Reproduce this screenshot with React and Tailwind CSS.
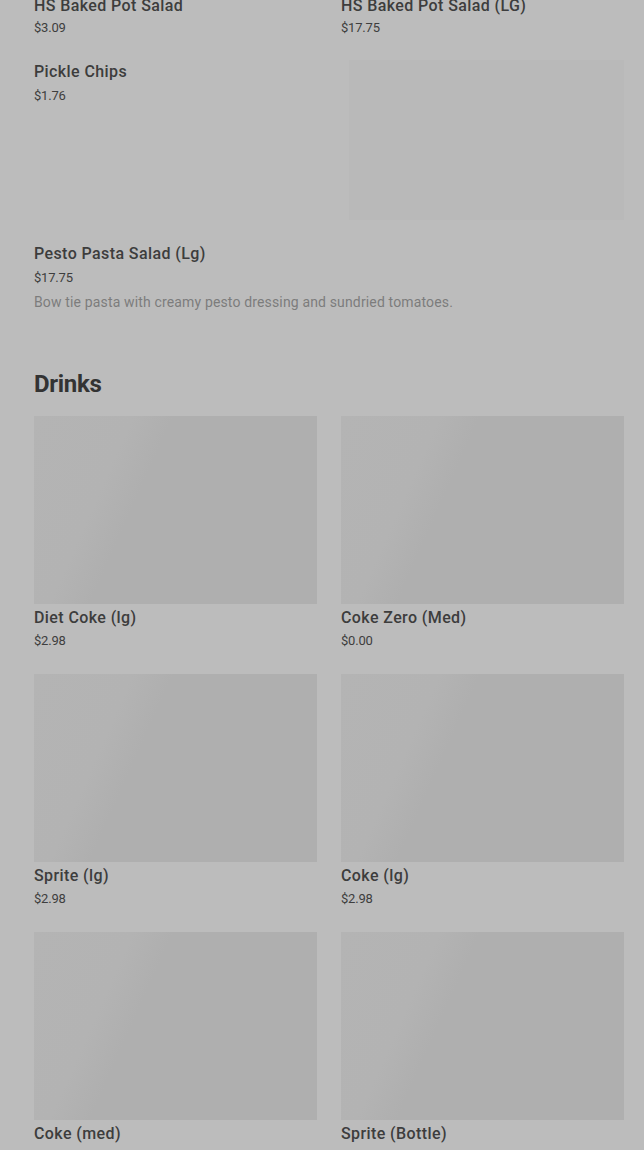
import React from "react";

const font = { fontFamily: "Roboto, 'Noto Sans', sans-serif" };

function TextItem({ title, price, desc, tight, className = "" }) {
  return (
    <div className={className}>
      <div className="text-[16px] leading-[24px] font-medium tracking-[0.4px] text-[#3d3d3d]">{title}</div>
      <div className={`text-[13px] leading-[20px] tracking-[-0.2px] text-[#3e3e3e] ${tight ? "" : "mt-[2px]"}`}>{price}</div>
      {desc && (
        <div className="mt-[4px] text-[14px] leading-[20px] tracking-[0.15px] text-[#7c7c7c]">{desc}</div>
      )}
    </div>
  );
}

function DrinkCard({ title, price }) {
  return (
    <div>
      <div className="h-[188px] w-full bg-[linear-gradient(114deg,#b4b4b4_0%,#b3b3b3_27%,#afafaf_38%,#afafaf_100%)]" />
      <div className="mt-[2px] text-[16px] leading-[24px] font-medium tracking-[0.4px] text-[#3d3d3d]">{title}</div>
      <div className="mt-[1px] text-[13px] leading-[20px] tracking-[-0.2px] text-[#3e3e3e]">{price}</div>
    </div>
  );
}

export default function App() {
  const drinks = [
    ["Diet Coke (lg)", "$2.98"],
    ["Coke Zero (Med)", "$0.00"],
    ["Sprite (lg)", "$2.98"],
    ["Coke (lg)", "$2.98"],
    ["Coke (med)", "$2.98"],
    ["Sprite (Bottle)", "$2.49"],
  ];
  return (
    <div className="w-[644px] h-[1150px] overflow-hidden bg-[#bcbcbc]" style={font}>
      <div className="pl-[34px] pr-[20px]">
        <div className="grid grid-cols-2 gap-x-6 gap-y-[22px] -mt-[6px]">
          <TextItem title="HS Baked Pot Salad" price="$3.09" tight />
          <TextItem title="HS Baked Pot Salad (LG)" price="$17.75" tight />
          <TextItem title="Pickle Chips" price="$1.76" />
          <div className="ml-[8px] h-[160px] bg-[#b9b9b9]" />
          <TextItem
            className="col-span-2"
            title="Pesto Pasta Salad (Lg)"
            price="$17.75"
            desc="Bow tie pasta with creamy pesto dressing and sundried tomatoes."
          />
        </div>

        <h2 className="mt-[56px] text-[24px] leading-[32px] font-bold tracking-[-0.3px] text-[#333333]">
          Drinks
        </h2>

        <div className="mt-4 grid grid-cols-2 gap-x-6 gap-y-[23px]">
          {drinks.map(([t, p]) => (
            <DrinkCard key={t} title={t} price={p} />
          ))}
        </div>
      </div>
    </div>
  );
}
